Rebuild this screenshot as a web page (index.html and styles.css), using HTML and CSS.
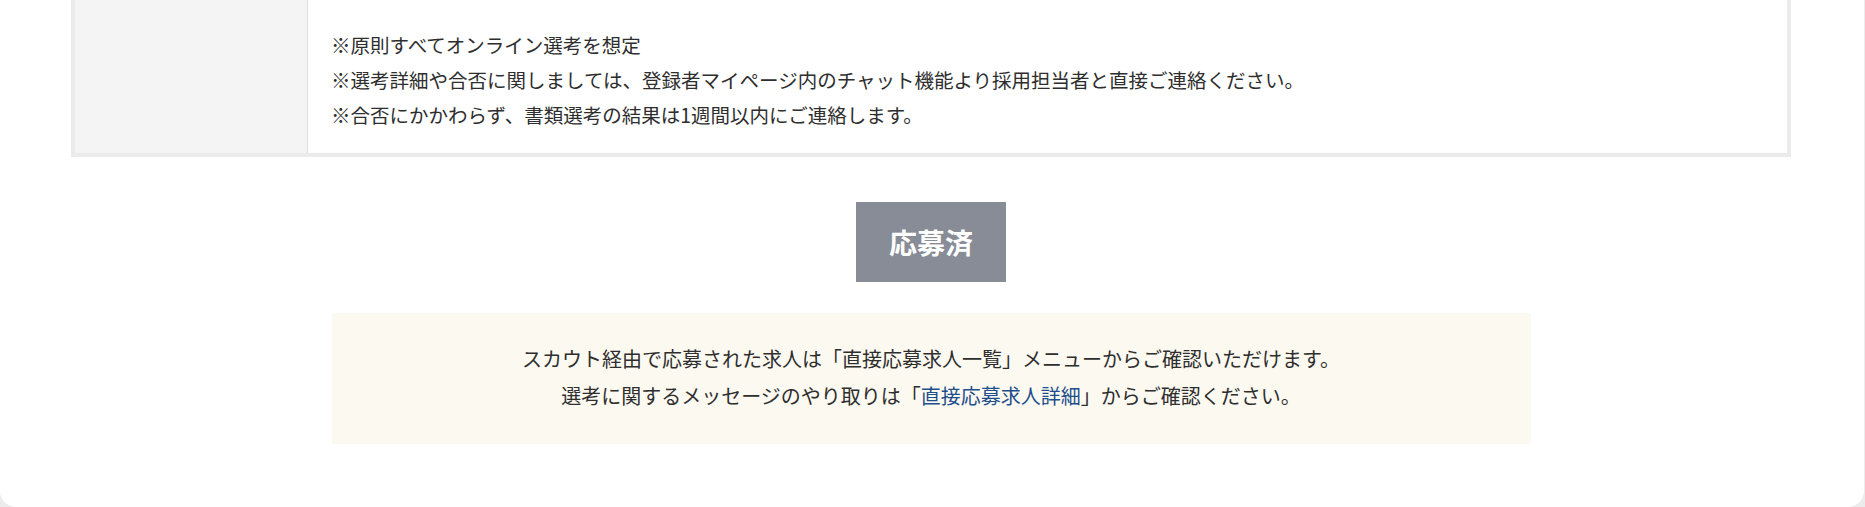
FILE: index.html
```html
<!DOCTYPE html>
<html lang="ja">
<head>
<meta charset="utf-8">
<title>応募済</title>
<link rel="stylesheet" href="styles.css">
</head>
<body>
<div class="page">
  <div class="detail-card">
    <div class="detail-row">
      <div class="detail-label"></div>
      <div class="detail-body">
        <p>※原則すべてオンライン選考を想定</p>
        <p>※選考詳細や合否に関しましては、登録者マイページ内のチャット機能より採用担当者と直接ご連絡ください。</p>
        <p>※合否にかかわらず、書類選考の結果は1週間以内にご連絡します。</p>
      </div>
    </div>
  </div>
  <div class="actions">
    <span class="applied-btn">応募済</span>
  </div>
  <div class="notice">
    <p>スカウト経由で応募された求人は「直接応募求人一覧」メニューからご確認いただけます。</p>
    <p>選考に関するメッセージのやり取りは「<a class="notice-link" href="#">直接応募求人詳細</a>」からご確認ください。</p>
  </div>
</div>
</body>
</html>
```

FILE: styles.css
```css
html, body {
  margin: 0;
  padding: 0;
}
body {
  background: #ececec;
  font-family: "Noto Sans CJK JP", "Noto Sans", sans-serif;
  color: #2e2e2e;
  height: 507px;
  overflow: hidden;
}
p {
  margin: 0;
}
.page {
  background: #ffffff;
  width: 1864px;
  height: 507px;
  box-sizing: border-box;
  border-radius: 0 0 16px 16px;
  padding: 0 73px 0 71px;
  display: flex;
  flex-direction: column;
  align-items: center;
}
.detail-card {
  align-self: stretch;
  border: 4px solid #ebebeb;
  border-top: none;
}
.detail-row {
  display: flex;
}
.detail-label {
  width: 232px;
  background: #f4f4f4;
  border-right: 1px solid #dddddd;
  flex-shrink: 0;
}
.detail-body {
  flex: 1;
  padding: 27px 24px 21px 23px;
  font-size: 19.5px;
  line-height: 35px;
}
.actions {
  margin-top: 45px;
  display: flex;
  justify-content: center;
}
.applied-btn {
  width: 150px;
  height: 80px;
  background: #878c96;
  color: #ffffff;
  font-weight: bold;
  font-size: 28px;
  display: flex;
  align-items: center;
  justify-content: center;
}
.notice {
  margin-top: 31px;
  width: 1199px;
  height: 131px;
  box-sizing: border-box;
  background: #fcf9f0;
  border-radius: 3px;
  padding: 27px 0 0;
  text-align: center;
  font-size: 20px;
  line-height: 37px;
}
.notice-link {
  color: #1f4e8c;
  text-decoration: none;
}
```
